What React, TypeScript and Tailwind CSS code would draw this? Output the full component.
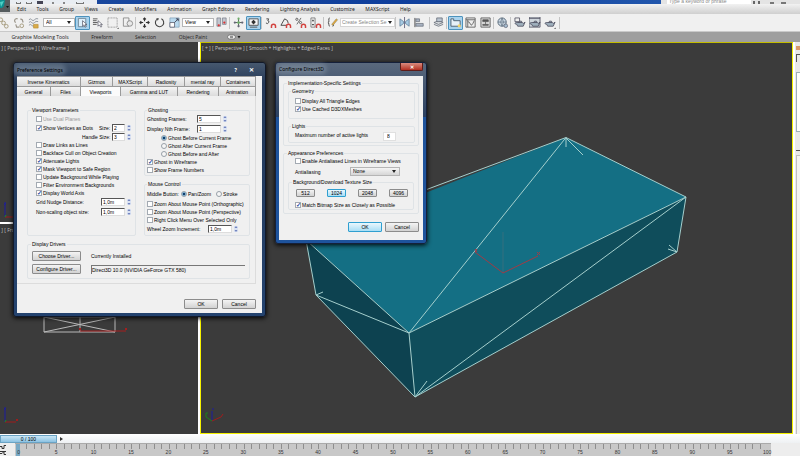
import type { ReactNode } from "react";
import clsx from "clsx";

const menus = [
    "Edit", "Tools", "Group", "Views", "Create", "Modifiers", "Animation", "Graph Editors",
    "Rendering", "Lighting Analysis", "Customize", "MAXScript", "Help",
];

const magnet = <path d="M7 12v-2a2.2 2.2 0 0 1 4.4 0v2" stroke="#d2433f" strokeWidth="1.6" />;
const teapot = <path d="M3 6h6l1 1 2-1.500-2 4.500H4L3 8C1 8 0 6 3 6zM5 6l1-1.500h2L9 6" fill="#9fb0bd" />;

const icons: Record<string, ReactNode> = {
    link: <><circle cx="3" cy="3" r="2" stroke="#a59a7c" /><circle cx="6" cy="6.500" r="2" stroke="#a59a7c" /><circle cx="9" cy="10" r="2" stroke="#a59a7c" /></>,
    unlink: <><path d="M5 2a2 2 0 1 0-2 4M8 2l2 1 1 3M3 8l1 3h3" stroke="#9b958a" strokeWidth="1.300" /><circle cx="9.500" cy="9.500" r="2" stroke="#a59a7c" /></>,
    bind: <><path d="M1 3q1.500-2 3 0t3 0 4-1M1 6q1.500-2 3 0t3 0 4-1M1 9q1.500-2 3 0t3 0" stroke="#8d949b" /><path d="M6 8h5v4H6z" fill="#d9ab4a" stroke="#b58a2e" strokeWidth=".6" /></>,
    pick: <><path d="M1.500 1.500h8v9h-8z" fill="#dff0fb" stroke="#6f8596" /><path d="M6 4v6l1.500-1.500L9 11l1-.6-1.200-2.200h2z" fill="#fff" stroke="#445" strokeWidth=".7" /></>,
    pickName: <><path d="M1 2h5M1 4h4M1 6h5M1 8h4" stroke="#555" /><path d="M6.500 4v6l1.500-1.500L9.500 11l1-.6-1.200-2.200h2z" fill="#fff" stroke="#445" strokeWidth=".7" /></>,
    region: <><path d="M1 1h10v10H1z" stroke="#8a8a8a" strokeWidth=".8" strokeDasharray="1.200 .5" /><path d="M11 13h1.500v-1.500z" fill="#333" /></>,
    crossing: <><path d="M1.500 1h6v9h-6z" stroke="#777" strokeWidth=".8" /><circle cx="8.500" cy="7" r="3" fill="#e8e8e8" stroke="#777" strokeWidth=".8" /></>,
    move: <path d="M6 1v3.500M6 7.500V11M1 6h3.500M7.500 6H11M4.500 2.500 6 1l1.500 1.500M4.500 9.500 6 11l1.500-1.500M2.500 4.500 1 6l1.500 1.500M9.500 4.500 11 6 9.500 7.500" stroke="#333" strokeWidth="1.200" />,
    rotate: <><path d="M8 2a4.500 4.500 0 1 1-4.500.3" stroke="#444" strokeWidth="1.200" /><path d="m2.500 1 3 .5-1.500 2.500z" fill="#444" /></>,
    scale: <><path d="M1 1h10v10H1z" fill="#b9d9ee" stroke="#7899b0" strokeWidth=".7" /><path d="M1 6h5v5H1z" fill="#fff" stroke="#556" strokeWidth=".8" /><path d="m6 6 4-4M7.500 2H10v2.500" stroke="#334" strokeWidth=".9" /></>,
    pivot: <><path d="M1 1h4v9H1zM7 1h4v7H7z" fill="#c2c6cf" stroke="#6f7480" strokeWidth=".7" /><circle cx="3" cy="9" r="1.200" fill="#d33" /><circle cx="9" cy="6" r="1.200" fill="#d33" /></>,
    manipulate: <><path d="M6 1v10M1 6h10" stroke="#4a5a4f" /><circle cx="6" cy="6" r="1.500" fill="#6fae6a" /><circle cx="6" cy="1.800" r="1.200" fill="#6fae6a" /><circle cx="2" cy="6" r="1.200" fill="#667" /><circle cx="10" cy="6" r="1.200" fill="#667" /><circle cx="6" cy="10" r="1.200" fill="#667" /></>,
    keyboard: <><path d="M1 2h10v7H1z" fill="#f5f5f5" stroke="#555" /><path d="m6 3 2.500 2.500L6 8 3.500 5.500z" fill="#333" /><path d="M2 11h8" stroke="#555" /></>,
    snap: <><path d="M1.500 2H4L3 4q2 0 1 2T1 6.500" stroke="#444" />{magnet}</>,
    angle: <><path d="M1 9h6M1 9l4-7M5 2q4 1 4 5" stroke="#444" />{magnet}</>,
    percent: <><circle cx="2" cy="2.500" r="1.200" stroke="#444" strokeWidth=".8" /><circle cx="6" cy="6" r="1.200" stroke="#444" strokeWidth=".8" /><path d="M6.500 1 2 8" stroke="#444" strokeWidth=".8" />{magnet}</>,
    spinner: <><path d="M1 1h4.500v10H1z" stroke="#666" strokeWidth=".8" /><path d="m3.200 2.500 1.300 2H2zM3.200 9.500l1.300-2H2z" fill="#333" />{magnet}</>,
    named: <><path d="M3 1Q1.500 1 2 3.500T1 6q1 0 1 2t1 2M6 10q1.500 0 1-2" stroke="#444" /><path d="m5 8 5-6 1.500 1-5 6z" fill="#e5a83a" stroke="#775" strokeWidth=".5" /></>,
    mirror: <><path d="M1 2v8l4-3V5zM11 2v8L7 7V5z" fill="#a9cbe4" stroke="#5b7c95" strokeWidth=".8" /><path d="M6 0v12" stroke="#446" strokeWidth=".8" /></>,
    align: <><path d="M1 1v10" stroke="#444" /><path d="M2 2h4v3H2zM2 7h8v3H2z" fill="#a9b3c2" stroke="#5d6470" strokeWidth=".7" /></>,
    layers: <><path d="m1 6 5-2 5 2-5 2zM1 8l5 2 5-2" fill="#d9dde0" stroke="#5d6470" strokeWidth=".8" /><path d="M4 1h6v4H4z" fill="#b9c4d0" stroke="#5d6470" strokeWidth=".8" /></>,
    ribbon: <><path d="M1 10V2h3v2h7v6z" fill="#e7f1f8" stroke="#4d5f70" /><circle cx="10" cy="9.500" r="1.700" fill="#f3d56a" /></>,
    curve: <><path d="M1 1h10v10H1z" fill="#eee" stroke="#555" strokeWidth=".9" /><path d="M1 3h10M3 11V3M3 5q2 0 3 3t4-4" stroke="#555" strokeWidth=".9" /></>,
    schematic: <><path d="M1 1h10v10H1z" fill="#ddd" stroke="#555" strokeWidth=".9" /><path d="M3 3h6v2H3zM3 8h6v1H3zM6 5v3" fill="#555" stroke="#555" strokeWidth=".8" /></>,
    material: <><circle cx="5.500" cy="5.500" r="4.500" fill="#c9d6e2" stroke="#58697a" /><path d="M1 5.500h9M5.500 1q-3 4.500 0 9M5.500 1q3 4.500 0 9" stroke="#58697a" strokeWidth=".7" /><circle cx="9.500" cy="9.500" r="2" fill="#a5bdd0" stroke="#445" strokeWidth=".6" /></>,
    setup: <g stroke="#445" strokeWidth=".8">{teapot}<path d="M1 1h5v4H1z" fill="#eee" /></g>,
    frame: <g stroke="#445" strokeWidth=".8"><path d="M0 0h12v11H0z" fill="#cfd6dc" /><path d="M0 1.500h12" />{teapot}</g>,
    render: <g stroke="#445" strokeWidth=".8">{teapot}<path d="M11 13h1.500v-1.500z" fill="#333" stroke="none" /></g>,
};

const Tool = ({ name, on }: { name: string; on?: boolean }) => (
    <button
        aria-label={name}
        className={clsx(
            "flex h-[14px] w-[15px] shrink-0 items-center justify-center border",
            on ? "rounded-[1px] border-[#4d93bd] bg-[#a9d3ee]" : "border-transparent",
        )}
    >
        <svg viewBox="0 0 13 13" className="size-[12px] shrink-0" fill="none">{icons[name]}</svg>
    </button>
);

const Tools = ({ names }: { names: string[] }) => names.map((n) => <Tool key={n} name={n} on={n === "pick" || n === "keyboard" || n === "ribbon"} />);

const Separator = () => <div className="h-[12px] w-[2px] shrink-0 border-l border-[#c4c4c4]" />;

const Arrow = () => <span className="pointer-events-none border-x-2 border-t-[3px] border-x-transparent border-t-[#222]" />;

const Select = ({ label, value, className }: { label: string; value: string; className: string }) => (
    <div className={clsx("flex shrink-0 items-center border border-[#b5b5b5] pr-[3px]", className)}>
        <select aria-label={label} className="min-w-0 flex-1 appearance-none pl-[2px] text-[5px] leading-[7px] outline-none">
            <option>{value}</option>
        </select>
        <Arrow />
    </div>
);

const Check = ({ label, checked, disabled }: { label: string; checked?: boolean; disabled?: boolean }) => (
    <label className={clsx("flex h-[8px] items-center gap-[1px] whitespace-nowrap", disabled && "text-[#999]")}>
        <input
            type="checkbox"
            defaultChecked={checked}
            disabled={disabled}
            className="flex size-[6px] shrink-0 appearance-none items-center justify-center border border-[#a3aab2] bg-white text-[6px] leading-[6px] font-bold text-[#27479a] checked:before:content-['✓']"
        />
        {label}
    </label>
);

const Radio = ({ label, name, checked }: { label: string; name: string; checked?: boolean }) => (
    <label className="flex h-[8px] items-center gap-[1px] whitespace-nowrap">
        <input
            type="radio"
            name={name}
            defaultChecked={checked}
            className="size-[6px] shrink-0 appearance-none rounded-full border border-[#98a0a8] bg-[#f6f6f6] checked:bg-[radial-gradient(#123f6d_35%,#8cc4e4_60%)]"
        />
        {label}
    </label>
);

const Spin = ({ label, value, wide, className }: { label: string; value: string; wide?: boolean; className: string }) => (
    <label className={clsx("flex items-center whitespace-nowrap", className)}>
        {label}
        <div className="ml-auto flex items-center gap-[2px]">
            <input
                defaultValue={value}
                className={clsx(
                    "h-[8px] border border-t-[#555] border-r-[#ddd] border-b-[#ddd] border-l-[#555] bg-white pl-[1px] text-[5px] leading-[6px]",
                    wide ? "w-[24px]" : "w-[13px]",
                )}
            />
            <svg viewBox="0 0 4 8" className="h-[8px] w-[4px]">
                <path d="M0 1h4v6H0z" fill="#dbe3f3" />
                <path d="m2 1 1.500 2h-3zM2 7l1.500-2h-3z" fill="#7183bd" />
            </svg>
        </div>
    </label>
);

const Group = ({ title, className, children }: { title: string; className?: string; children: ReactNode }) => (
    <fieldset className={clsx("min-w-0 rounded-[2px] border border-[#dfe3e6]", className)}>
        <legend className="px-[1px] leading-[6px]">{title}</legend>
        {children}
    </fieldset>
);

const PushButton = ({ children, className, primary }: { children: ReactNode; className: string; primary?: boolean }) => (
    <button
        className={clsx(
            "flex items-center justify-center rounded-[1px] border whitespace-nowrap",
            primary
                ? "border-[#2f9fd0] bg-linear-to-b from-[#eaf7fd] to-[#a8def5]"
                : "border-[#8c8c8c] bg-linear-to-b from-[#f4f4f4] to-[#d2d2d2]",
            className,
        )}
    >
        {children}
    </button>
);

const Tab = ({ label, className }: { label: string; className: string }) => (
    <button
        role="tab"
        aria-selected={label === "Viewports"}
        className={clsx(
            "flex h-[10px] items-center justify-center border border-b-0 border-l-0 border-[#9a9a9a] whitespace-nowrap",
            label === "Viewports" ? "bg-[#fbfbfb]" : "border-b bg-linear-to-b from-[#f4f4f4] to-[#dcdcdc]",
            className,
        )}
    >
        {label}
    </button>
);

const PreferenceSettings = () => (
    <section className="absolute top-[62px] left-[13px] w-[253px] rounded-[3px] border border-[#11192a] bg-linear-to-b from-[#46586e] via-[#263a58] via-8% to-[#24436f] px-[3px] pb-[3px] text-[5px] leading-[6px] text-black shadow-[0_1px_5px_#000]">
        <header className="flex h-[13px] items-center font-['Noto_Sans',sans-serif]">
            <h2 className="rounded-full bg-[#8f9dac]/40 shadow-[0_0_4px_3px_#8f9dac66]">Preference Settings</h2>
            <button className="mr-[12px] ml-auto font-bold text-white">?</button>
            <button aria-label="Close" className="mr-[8px] text-[6px] font-bold text-white">✕</button>
        </header>
        <div className="bg-[#f0f0f0] pb-[4px]">
            <div role="tablist" className="mr-[6px]">
                <div className="flex">
                    <Tab label="Inverse Kinematics" className="w-[64px]" />
                    <Tab label="Gizmos" className="w-[32px]" />
                    <Tab label="MAXScript" className="w-[35px]" />
                    <Tab label="Radiosity" className="w-[37px]" />
                    <Tab label="mental ray" className="flex-1" />
                    <Tab label="Containers" className="w-[35px]" />
                </div>
                <div className="flex">
                    <Tab label="General" className="w-[34px]" />
                    <Tab label="Files" className="w-[30px]" />
                    <Tab label="Viewports" className="w-[40px]" />
                    <Tab label="Gamma and LUT" className="flex-1" />
                    <Tab label="Rendering" className="w-[41px]" />
                    <Tab label="Animation" className="w-[37px]" />
                </div>
            </div>
            <div className="mr-[6px] border-r border-b border-[#dcdcdc] pt-[11px] pr-[5px] pb-[4px] pl-[10px]">
                <div className="flex items-stretch gap-[8px]">
                    <Group title="Viewport Parameters" className="w-[109px] pt-[2px] pr-[4px] pb-[17px] pl-[8px] [&>legend]:-ml-[5px]">
                        <Check label="Use Dual Planes" disabled />
                        <div className="flex h-[9px] items-center justify-between">
                            <Check label="Show Vertices as Dots" checked />
                            <Spin label="Size:" value="2" className="w-[32px]" />
                        </div>
                        <Spin label="Handle Size:" value="3" className="ml-auto h-[9px] w-[49px]" />
                        <Check label="Draw Links as Lines" />
                        <Check label="Backface Cull on Object Creation" />
                        <Check label="Attenuate Lights" checked />
                        <Check label="Mask Viewport to Safe Region" checked />
                        <Check label="Update Background While Playing" />
                        <Check label="Filter Environment Backgrounds" />
                        <Check label="Display World Axis" checked />
                        <Spin label="Grid Nudge Distance:" value="1,0m" wide className="h-[10px]" />
                        <Spin label="Non-scaling object size:" value="1,0m" wide className="h-[10px]" />
                    </Group>
                    <div className="flex min-w-0 flex-1 flex-col gap-[5px]">
                        <Group title="Ghosting" className="pt-[1px] pb-[1px] pl-[2px]">
                            <Spin label="Ghosting Frames:" value="5" wide className="h-[10px] w-[80px]" />
                            <Spin label="Display Nth Frame:" value="1" wide className="h-[10px] w-[80px]" />
                            <div className="pl-[14px]">
                                <Radio name="ghost" label="Ghost Before Current Frame" checked />
                                <Radio name="ghost" label="Ghost After Current Frame" />
                                <Radio name="ghost" label="Ghost Before and After" />
                            </div>
                            <Check label="Ghost in Wireframe" checked />
                            <Check label="Show Frame Numbers" />
                        </Group>
                        <Group title="Mouse Control" className="pt-[2px] pb-[1px] pl-[2px]">
                            <div className="mb-[1px] flex h-[10px] items-center">
                                <span className="w-[34px] whitespace-nowrap">Middle Button:</span>
                                <Radio name="middle" label="Pan/Zoom" checked />
                                <div className="ml-[5px]"><Radio name="middle" label="Stroke" /></div>
                            </div>
                            <Check label="Zoom About Mouse Point (Orthographic)" />
                            <Check label="Zoom About Mouse Point (Perspective)" />
                            <Check label="Right Click Menu Over Selected Only" />
                            <Spin label="Wheel Zoom Increment:" value="1,0m" wide className="h-[10px] w-[91px]" />
                        </Group>
                    </div>
                </div>
                <Group title="Display Drivers" className="mt-[5px] flex flex-col gap-[3px] px-[4px] pt-[4px] pb-[4px] [&>legend]:-ml-[1px]">
                    <div className="flex items-center gap-[10px]">
                        <PushButton className="h-[10px] w-[49px]">Choose Driver...</PushButton>
                        <label htmlFor="driver">Currently Installed</label>
                    </div>
                    <div className="flex items-center gap-[10px]">
                        <PushButton className="h-[10px] w-[49px]">Configure Driver...</PushButton>
                        <input
                            id="driver"
                            readOnly
                            defaultValue="Direct3D 10.0 (NVIDIA GeForce GTX 580)"
                            className="h-[9px] min-w-0 flex-1 border-t border-l border-[#777]"
                        />
                    </div>
                </Group>
            </div>
            <footer className="mt-[15px] mr-[6px] flex justify-end gap-[4px]">
                <PushButton className="h-[10px] w-[34px]">OK</PushButton>
                <PushButton className="h-[10px] w-[34px]">Cancel</PushButton>
            </footer>
        </div>
    </section>
);

const ConfigureDirect3D = () => (
    <section className="absolute top-[62px] left-[275px] w-[152px] rounded-[3px] border border-[#15203a] bg-linear-to-b from-[#5a697d] via-[#2b4060] via-30% to-[#1e539c] to-30% px-[3px] pb-[3px] text-[5px] leading-[6px] text-black shadow-[0_1px_5px_#000]">
        <header className="flex h-[13px] items-start font-['Noto_Sans',sans-serif]">
            <h2 className="mt-[3px] rounded-full bg-[#94a2b2]/40 shadow-[0_0_4px_3px_#94a2b266]">Configure Direct3D</h2>
            <button aria-label="Close" className="ml-auto flex h-[8px] w-[23px] items-center justify-center rounded-b-[2px] border border-t-0 border-[#5e1c18] bg-linear-to-b from-[#d98a7e] to-[#b22c20] font-bold text-white">✕</button>
        </header>
        <div className="bg-[#f0f0f0] px-[4px] pt-[4px] pb-[8px]">
            <Group title="Implementation-Specific Settings" className="pr-[3px] pb-[2px] pl-[4px] [&>legend]:-ml-[1px]">
                <Group title="Geometry" className="mt-[2px] pt-[3px] pr-[4px] pb-[5px] pl-[6px] [&>legend]:-ml-[4px]">
                    <Check label="Display All Triangle Edges" />
                    <Check label="Use Cached D3DXMeshes" checked />
                </Group>
                <Group title="Lights" className="mt-[4px] pb-[1px] pl-[6px] [&>legend]:-ml-[4px]">
                    <label className="flex h-[12px] items-center whitespace-nowrap">
                        Maximum number of active lights
                        <input defaultValue="8" className="mt-[2px] mr-[18px] ml-auto h-[9px] w-[13px] border border-[#e0e0e0] bg-white pl-[3px]" />
                    </label>
                </Group>
            </Group>
            <Group title="Appearance Preferences" className="mt-[4px] px-[4px] pt-[1px] pb-[3px] [&>legend]:-ml-[1px]">
                <div className="pl-[7px]"><Check label="Enable Antialiased Lines in Wireframe Views" /></div>
                <div className="mt-[1px] mb-[2px] flex h-[11px] items-center justify-between pr-[14px] pl-[7px]">
                    Antialiasing
                    <Select label="Antialiasing" value="None" className="h-[9px] w-[50px] border-[#8c8c8c] bg-linear-to-b from-[#f4f4f4] to-[#d6d6d6]" />
                </div>
                <Group title="Background/Download Texture Size" className="pt-[4px] pl-[6px] [&>legend]:-ml-[3px]">
                    <div className="mb-[4px] flex gap-[12px] pl-[1px]">
                        <PushButton className="h-[8px] w-[19px]">512</PushButton>
                        <PushButton primary className="h-[8px] w-[19px] from-[#9ddcf9] to-[#4aaee0]">1024</PushButton>
                        <PushButton className="h-[8px] w-[19px]">2048</PushButton>
                        <PushButton className="h-[8px] w-[19px]">4096</PushButton>
                    </div>
                    <Check label="Match Bitmap Size as Closely as Possible" checked />
                </Group>
            </Group>
            <footer className="mt-[8px] flex justify-end gap-[3px]">
                <PushButton primary className="h-[10px] w-[34px]">OK</PushButton>
                <PushButton className="h-[10px] w-[34px]">Cancel</PushButton>
            </footer>
        </div>
    </section>
);

// the little x/y/z tripod in a viewport corner
const Tripod = () => (
    <svg viewBox="0 0 20 20" className="size-[20px]" fill="none">
        <path d="M5 15V4M4 1h2L4 3h2" stroke="#1c1ca0" />
        <path d="M5 15h11M16 12l2 2M18 12l-2 2" stroke="#a01c1c" />
        <path d="m5 15 1-2" stroke="#1c901c" />
    </svg>
);

const WireScene = () => (
    <svg viewBox="0 0 90 20" className="ml-[40px] h-[20px] w-[90px]" fill="none">
        <path d="M4 2h71v15H4zL75 17M4 17 75 2M40 2v15" stroke="#b9b9b9" />
        <path d="M40 16h46M39 13l2 2M41 13l-2 2M85 13l2 2M87 13l-2 2" stroke="#a51f1f" />
    </svg>
);

const BoxScene = () => (
    <svg viewBox="201 43 591 390" preserveAspectRatio="xMidYMid slice" className="size-full" fill="none">
        <path d="M306 240 566 137.500 686 197 409 333z" fill="#146f84" />
        <path d="M306 240 409 333 415 397 316 295z" fill="#0d4250" />
        <path d="M409 333 686 197 677 252 415 397z" fill="#0f4d5b" />
        <g stroke="#a5cfcd" strokeWidth="1">
            <path d="M306 240 428 189 566 137.500 686 197 409 333zL316 295 415 397 677 252 686 197M409 333l6 64M409 333 566 137.500M316 295l93 38M415 397 686 197" />
            <path d="M566 138v9M566 138l17 17M677 252l-8-7M677 252l-9-3M415 397l12-16M316 295l7-3" />
        </g>
        <path d="M503 273V232" stroke="#35717e" />
        <path d="m475 252 28 21 35-17M475 249l2 3M477 249l-2 3M537 252l3 3M540 252l-3 3" stroke="#a03b45" />
        <path d="M212 421v-10M212 409h2" stroke="#1c1ca0" />
        <path d="m212 421-6-4v-4h2" stroke="#1c801c" />
        <path d="m212 421 9-4 2-3" stroke="#a01c1c" />
    </svg>
);

const Timeline = () => (
    <footer className="flex h-[22px] shrink-0 flex-col bg-[#ededed] text-[5px] leading-[6px] text-[#333]">
        <div className="flex h-[9px] items-center bg-linear-to-b from-white to-[#eef1f3]">
            <button className="h-[8px] w-[57px] border border-[#6aa3c4] bg-linear-to-b from-[#cbe8f7] to-[#8cc2e2] leading-[6px] text-black">0 / 100</button>
            <span className="ml-[3px] border-y-2 border-l-[3px] border-y-transparent border-l-[#333]" />
        </div>
        <div className="flex flex-1">
            <button aria-label="Open mini curve editor" className="w-[15px] shrink-0">
                <svg viewBox="0 0 15 13" className="h-[13px] w-[15px]" fill="none" stroke="#333">
                    <path d="M0 3.500h2v2h2v-3h2M0 8.500h6M0 10.500h2l2-2v3h2" />
                </svg>
            </button>
            <div className="mr-[29px] flex-1 border-t border-[#aaa] bg-[#c8c8c8]">
                <div className="mr-[4px] ml-[3px] flex h-[5px]">
                    {Array.from({ length: 100 }, (_, i) => (
                        <i key={i} className={clsx("flex-1", i ? "border-l border-[#8e8e8e]" : "-ml-[2px] h-[12px] border-l-[4px] border-[#78a8c4]")} />
                    ))}
                </div>
                <ol className="relative -mr-[15px] -ml-[15px] flex">
                    {Array.from({ length: 21 }, (_, i) => (
                        <li key={i} className="flex-1 text-center">{i * 5}</li>
                    ))}
                </ol>
            </div>
        </div>
    </footer>
);

export default function App() {
    return (
        <div className="relative flex h-screen flex-col overflow-hidden bg-white font-['Liberation_Sans',sans-serif] text-[5px] leading-[6px] text-black">
            <header className="flex h-[4px] shrink-0 items-end overflow-hidden bg-linear-to-r from-[#1c4a9e] via-[#0f3f9c] to-[#2b62b5]">
                <div className="flex h-full w-[97px] shrink-0 items-end gap-[5px] bg-[#e9edf2] pl-[16px] text-[#556]">
                    <i className="h-[2px] w-[5px] border border-t-0 border-[#777]" />
                    <i className="h-[2px] w-[6px] border border-t-0 border-[#777]" />
                    <i className="h-[3px] w-[6px] bg-[#445]" />
                    <i className="ml-[4px] h-[2px] w-[2px] bg-[#888]" />
                    <i className="ml-[4px] h-[2px] w-[2px] bg-[#888]" />
                    <i className="ml-[6px] h-[2px] w-[8px] border border-t-0 border-[#777]" />
                </div>
                <div className="ml-auto flex h-full w-[139px] shrink-0 items-end gap-[10px] bg-[#e4e4e4] pl-[6px]">
                    <input aria-label="Search" placeholder="Type a keyword or phrase" className="w-[84px] bg-white pl-[2px] text-[5px] leading-[6px] placeholder:text-[#888]" />
                    <i className="-ml-[8px] h-[3px] w-[7px] border-x-2 border-[#666]" />
                    <i className="h-[2px] w-[4px] bg-[#777]" />
                    <i className="-ml-[3px] h-[2px] w-[5px] bg-[#777]" />
                </div>
            </header>
            <nav className="flex h-[10px] shrink-0 items-center bg-linear-to-b from-[#f2f2f2] to-[#cfcfcf] font-['Noto_Sans',sans-serif] text-[#222]">
                <svg viewBox="0 0 11 14" className="-mt-[4px] mr-[6px] h-[14px] w-[11px] shrink-0">
                    <path d="M0 0h10v12H0z" fill="#555c5e" />
                    <path d="M0 0h5L4 6 2 8H0z" fill="#0c8f8f" />
                    <path d="M0 2 4 1 1 7z" fill="#4fd0c6" />
                    <path d="M6 6h3L7.500 8z" fill="#111" />
                </svg>
                <div className="flex w-[394px] justify-between">
                    {menus.map((m) => <button key={m} className="whitespace-nowrap">{m}</button>)}
                </div>
            </nav>
            <div className="flex h-[18px] shrink-0 items-center overflow-hidden border-b border-[#c9c9c9] bg-[#f0f0f0]">
                <div className="-ml-[4px] flex"><Tools names={["link", "unlink", "bind"]} /></div>
                <Select label="Selection filter" value="All" className="ml-[2px] h-[9px] w-[32px] bg-white" />
                <Tools names={["pick", "pickName", "region", "crossing"]} />
                <Separator />
                <Tools names={["move", "rotate", "scale"]} />
                <Select label="Reference coordinate system" value="View" className="h-[9px] w-[32px] bg-white" />
                <Tools names={["pivot"]} />
                <Separator />
                <Tools names={["manipulate", "keyboard"]} />
                <Separator />
                <Tools names={["snap", "angle", "percent", "spinner"]} />
                <Separator />
                <Tools names={["named"]} />
                <div className="flex h-[9px] w-[55px] shrink-0 items-center border border-[#d5d5d5] bg-white pr-[2px]">
                    <input aria-label="Named selection set" placeholder="Create Selection Se" className="min-w-0 flex-1 pl-[1px] text-[5px] leading-[7px] placeholder:text-[#888]" />
                    <Arrow />
                </div>
                <Separator />
                <Tools names={["mirror", "align"]} />
                <div className="ml-[2px] flex items-center">
                    <Separator />
                    <Tools names={["layers"]} />
                </div>
                <Separator />
                <Tools names={["ribbon", "curve", "schematic"]} />
                <Separator />
                <Tools names={["material"]} />
                <Separator />
                <Tools names={["setup", "frame", "render"]} />
                <div className="ml-[2px]"><Separator /></div>
            </div>
            <div className="flex h-[10px] shrink-0 items-stretch bg-[#9e9e9e] font-['Open_Sans',sans-serif] text-[#222]">
                <button className="w-[80px] bg-[#e6e6e6] whitespace-nowrap">Graphite Modeling Tools</button>
                <button className="w-[44px]">Freeform</button>
                <button className="w-[43px]">Selection</button>
                <button className="w-[52px]">Object Paint</button>
                <button aria-label="Ribbon display" className="ml-[8px]">
                    <svg viewBox="0 0 14 6" className="h-[6px] w-[14px]" fill="none">
                        <rect x=".5" y="1" width="8" height="4" rx="2" fill="#eee" stroke="#666" strokeWidth=".7" />
                        <path d="M3 3h3" stroke="#333" />
                        <path d="M10.500 2h3L12 4.500z" fill="#222" />
                    </svg>
                </button>
            </div>
            <main className="flex min-h-0 flex-1 font-['Open_Sans',sans-serif] text-[#c4c4c4]">
                <div className="flex w-1/4 shrink-0 flex-col gap-[2px] pr-[2px]">
                    <div className="flex min-h-0 flex-1 flex-col justify-between bg-[#3b3b3b] pt-[3px]">
                        <p className="whitespace-pre"> ] [ Perspective ] [ Wireframe ]</p>
                        <Tripod />
                    </div>
                    <div className="flex min-h-0 flex-[1.170] flex-col bg-[#3b3b3b] pt-[3px]">
                        <p className="whitespace-pre"> ] [ Front ]</p>
                        <div className="mt-[82px]"><WireScene /></div>
                        <div className="mt-auto mb-[7px]"><Tripod /></div>
                    </div>
                </div>
                <div className="relative min-w-0 flex-1 border border-t-[#c4bd00] border-r-[#f4f000] border-b-[#f4f000] border-l-[#f4f000] bg-[#3b3b3b]">
                    <BoxScene />
                    <p className="absolute top-[2px] left-[1px]">[ + ] [ Perspective ] [ Smooth + Highlights + Edged Faces ]</p>
                </div>
                <aside className="flex w-[7px] shrink-0 flex-col border-l-2 border-white bg-[#e9e9e9]">
                    <i className="mt-[4px] h-[4px] w-[4px] self-end bg-[#d99a6a]" />
                    <i className="mt-[4px] h-[8px] w-[4px] self-end border-t border-l border-[#555]" />
                    <i className="mt-[10px] h-[60px] w-[4px] self-end border border-r-0 border-[#9fb0b8] bg-white" />
                    <i className="mt-[18px] h-px w-[4px] self-end bg-[#555]" />
                    <i className="mt-[4px] w-[4px] flex-1 self-end border-t border-l border-[#c0c0c0] bg-[#f3f3f3]" />
                </aside>
            </main>
            <Timeline />
            <PreferenceSettings />
            <ConfigureDirect3D />
        </div>
    );
}
